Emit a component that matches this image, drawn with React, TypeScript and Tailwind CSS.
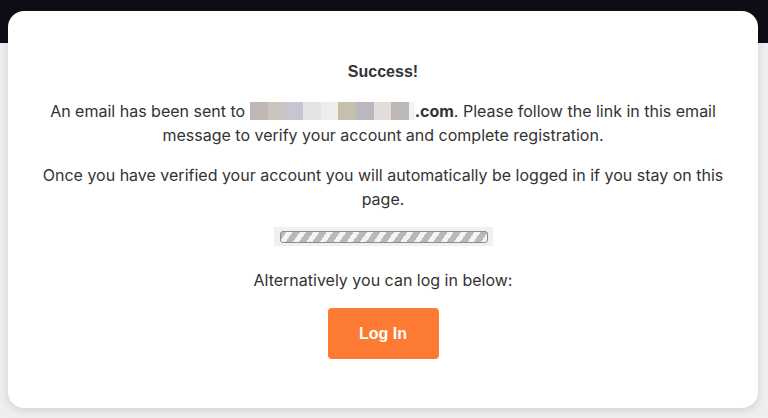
import React from 'react';

const blurBlocks = [
  { w: 'w-[18px]', c: 'bg-[#c0b6b6]' },
  { w: 'w-[17px]', c: 'bg-[#cac5bf]' },
  { w: 'w-[18px]', c: 'bg-[#c5c6d2]' },
  { w: 'w-[18px]', c: 'bg-[#e4e3e1]' },
  { w: 'w-[17px]', c: 'bg-[#eceeec]' },
  { w: 'w-[18px]', c: 'bg-[#c6bfab]' },
  { w: 'w-[18px]', c: 'bg-[#bab7bd]' },
  { w: 'w-[17px]', c: 'bg-[#e2ddd8]' },
  { w: 'w-[18px]', c: 'bg-[#bcb8b5]' },
  { w: 'w-[6px]', c: 'bg-[#f2f4f2]' },
];

const App = () => {
  return (
    <div className="min-h-[418px] bg-[linear-gradient(to_bottom,#0e0e16_43px,#efefef_43px)] pt-[11px] pb-[10px] font-['Inter',sans-serif] text-[#333333]">
      <div className="ml-2 mr-[10px] rounded-2xl bg-white px-8 pt-[49px] pb-[49px] text-center shadow-[0_2px_10px_rgba(0,0,0,0.14)]">
        <h2 className="font-['Liberation_Sans',sans-serif] text-[16px] leading-6 font-bold">Success!</h2>

        <p className="mt-[15px] text-[16px] leading-6">
          An email has been sent to{' '}
          <span className="inline-flex h-[18px] align-[-3px]">
            {blurBlocks.map((b, i) => (
              <span key={i} className={`h-full ${b.w} ${b.c}`} />
            ))}
          </span>
          <b className="font-bold">.com</b>. Please follow the link in this email message to verify your account and
          complete registration.
        </p>

        <p className="mt-4 text-[16px] leading-6">
          Once you have verified your account you will automatically be logged in if you stay on this page.
        </p>

        <div className="mt-4 flex justify-center">
          <div className="flex h-[19px] w-[219px] items-center bg-[#f0f0f0] pl-[6px]">
            <div className="h-[12px] w-[208px] rounded-[3px] border border-[#8c8c8c] bg-[repeating-linear-gradient(-55deg,#f4f4f4_0,#f4f4f4_5px,#b9b9b9_5px,#b9b9b9_11px)]" />
          </div>
        </div>

        <p className="mt-[22px] text-[16px] leading-6">Alternatively you can log in below:</p>

        <div className="mt-4 flex justify-center">
          <button
            type="button"
            className="h-[51px] w-[111px] rounded-[4px] bg-[#fd7a33] font-['Liberation_Sans',sans-serif] text-[16px] font-bold text-white"
          >
            Log In
          </button>
        </div>
      </div>
    </div>
  );
};

export default App;
